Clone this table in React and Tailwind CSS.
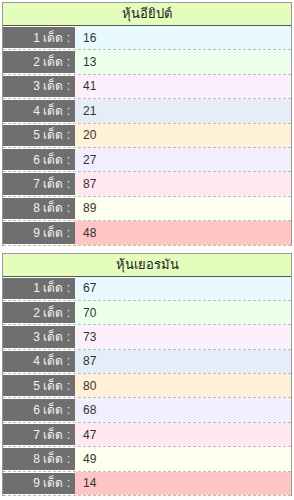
import React from 'react';

const rowColors = [
  'bg-[#e8faff]',
  'bg-[#ebffea]',
  'bg-[#fdf0fd]',
  'bg-[#e5edf8]',
  'bg-[#fff0d8]',
  'bg-[#f0eeff]',
  'bg-[#ffe8f0]',
  'bg-[#fffff0]',
  'bg-[#ffc4c4]',
];

const tables = [
  { title: 'หุ้นอียิปต์', nums: ['16', '13', '41', '21', '20', '27', '87', '89', '48'] },
  { title: 'หุ้นเยอรมัน', nums: ['67', '70', '73', '87', '80', '68', '47', '49', '14'] },
];

const Table = ({ title, nums, className }) => (
  <div className={`mx-[2px] border-x border-t border-[#999] ${className}`}>
    <div className="h-[23px] flex items-center justify-center bg-[#e4fcbc] border-b border-[#555] text-[13px] text-[#222]">
      {title}
    </div>
    {nums.map((n, i) => (
      <div key={i} className={`h-[24.4px] flex border-b border-dashed border-[#bbb] bg-white`}>
        <div className="w-[72px] my-[1px] bg-[#6f6f6f] text-[#f2f2f2] text-[12px] flex items-center justify-end pr-[5px]">
          {i + 1} เด็ด :
        </div>
        <div className={`flex-1 flex items-center pl-[8px] text-[12px] text-[#333] ${rowColors[i]}`}>
          {n}
        </div>
      </div>
    ))}
  </div>
);

const App = () => {
  return (
    <div className="w-[294px] h-[500px] bg-white pt-[2px] overflow-hidden" style={{ fontFamily: '"Liberation Sans", "Noto Sans", "DejaVu Sans", sans-serif' }}>
      <Table {...tables[0]} />
      <Table {...tables[1]} className="mt-[7px]" />
    </div>
  );
};

export default App;
